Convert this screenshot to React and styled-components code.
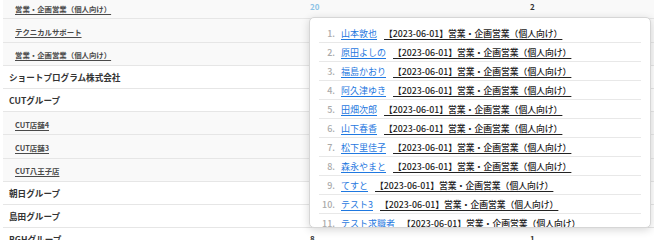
import React from "react"
import styled, { createGlobalStyle } from "styled-components"

const rows = [
  { name: "営業・企画営業（個人向け）", sub: true, a: "20", b: "2", aBlue: true },
  { name: "テクニカルサポート", sub: true },
  { name: "営業・企画営業（個人向け）", sub: true },
  { name: "ショートプログラム株式会社" },
  { name: "CUTグループ" },
  { name: "CUT店舗4", sub: true },
  { name: "CUT店舗3", sub: true },
  { name: "CUT八王子店", sub: true },
  { name: "朝日グループ" },
  { name: "島田グループ" },
  { name: "BGHグループ", a: "8", b: "1" },
]

const people = [
  "山本敦也",
  "原田よしの",
  "福島かおり",
  "阿久津ゆき",
  "田畑次郎",
  "山下春香",
  "松下里佳子",
  "森永やまと",
  "てすと",
  "テスト3",
  "テスト求職者",
]

const label = "【2023-06-01】営業・企画営業（個人向け）"

export default function App() {
  return (
    <>
      <GlobalStyle />
      <Page>
        <Table>
          {rows.map((r, i) => (
            <Row key={i} $sub={r.sub}>
              <NameCell $sub={r.sub}>{r.name}</NameCell>
              <ValueCell $blue={r.aBlue}>{r.a}</ValueCell>
              <ValueCell>{r.b}</ValueCell>
            </Row>
          ))}
        </Table>
        <Popover>
          <List>
            {people.map((p, i) => (
              <Item key={i}>
                <Num>{i + 1}.</Num>
                <PersonLink href="#">{p}</PersonLink>
                <Entry href="#">{label}</Entry>
              </Item>
            ))}
          </List>
        </Popover>
      </Page>
    </>
  )
}

const GlobalStyle = createGlobalStyle`
  html, body {
    margin: 0;
    padding: 0;
    background: #ffffff;
    overflow: hidden;
  }
  body {
    font-family: "Noto Sans CJK JP", "Noto Sans", sans-serif;
    color: #333;
  }
`

const Page = styled.div`
  position: relative;
  width: 654px;
  height: 240px;
  overflow: hidden;
`

const Table = styled.div`
  margin-top: -3.8px;
  margin-left: 3px;
`

const Row = styled.div`
  display: grid;
  grid-template-columns: 302px 220px 1fr;
  align-items: center;
  height: 23.2px;
  box-sizing: border-box;
  border-bottom: 1px solid #e6e6e6;
  background: ${(p) => (p.$sub ? "#f9f9f9" : "#ffffff")};
  line-height: 1;
`

const NameCell = styled.div`
  padding-left: ${(p) => (p.$sub ? "12px" : "6px")};
  padding-top: ${(p) => (p.$sub ? "2px" : "1px")};
  white-space: nowrap;
  font-size: ${(p) => (p.$sub ? "7.4px" : "8.6px")};
  font-weight: 700;
  color: ${(p) => (p.$sub ? "#4a4a4a" : "#333")};
  text-decoration: ${(p) => (p.$sub ? "underline" : "none")};
  text-underline-offset: 1.5px;
`

const ValueCell = styled.div`
  padding-left: 5px;
  font-size: 8px;
  font-weight: 700;
  color: ${(p) => (p.$blue ? "#8cc3e6" : "#333")};
`

const Popover = styled.div`
  position: absolute;
  left: 309px;
  top: 17px;
  width: 342px;
  height: 211px;
  box-sizing: border-box;
  background: #ffffff;
  border: 1px solid #d6d6d6;
  border-radius: 5px;
  box-shadow: 0 2px 8px rgba(0, 0, 0, 0.16);
  overflow: hidden;
  padding: 6px 9px 0 9px;
`

const List = styled.ol`
  margin: 0;
  padding: 0;
  list-style: none;
`

const Item = styled.li`
  display: flex;
  align-items: center;
  height: 19px;
  box-sizing: border-box;
  border-bottom: 1px solid #e8e8e8;
  white-space: nowrap;
  font-size: 9px;
`

const Num = styled.span`
  width: 16px;
  text-align: right;
  margin-right: 6px;
  color: #aaa;
  font-weight: 500;
`

const PersonLink = styled.a`
  color: #1f78e0;
  text-decoration: underline;
  text-underline-offset: 1.5px;
  margin-right: 7px;
`

const Entry = styled.a`
  color: #222;
  font-size: 8.8px;
  font-weight: 500;
  text-decoration: underline;
  text-decoration-thickness: 1.3px;
  text-underline-offset: 1.5px;
`
